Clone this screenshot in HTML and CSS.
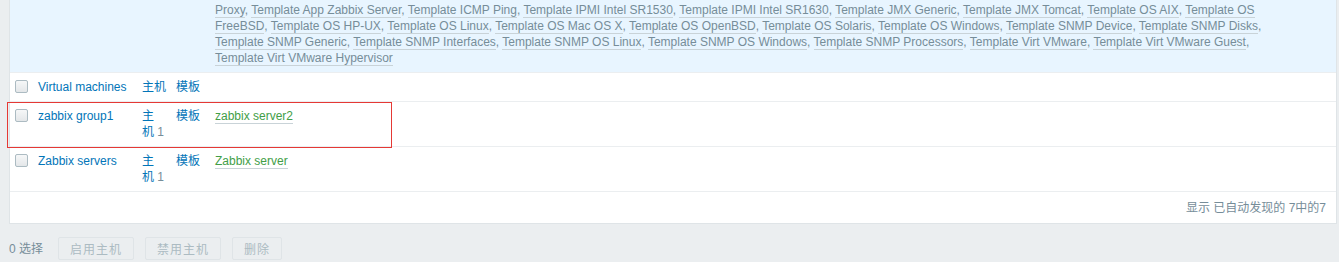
FILE: index.html
```html
<!DOCTYPE html>
<html lang="zh-CN">
<head>
    <meta charset="UTF-8">
    <title>主机群组</title>
    <link rel="stylesheet" href="styles.css">
</head>
<body>
    <div class="page">
        <div class="list">
            <table class="groups">
                <colgroup>
                    <col class="c-check">
                    <col class="c-name">
                    <col class="c-hosts">
                    <col class="c-tpl">
                    <col class="c-members">
                    <col class="c-rest">
                </colgroup>
                <tr class="row-hover row-top">
                    <td></td>
                    <td></td>
                    <td></td>
                    <td></td>
                    <td class="members">
                        <a class="alt grey" href="#">Proxy</a>, <a class="alt grey" href="#">Template App Zabbix Server</a>, <a class="alt grey" href="#">Template ICMP Ping</a>, <a class="alt grey" href="#">Template IPMI Intel SR1530</a>, <a class="alt grey" href="#">Template IPMI Intel SR1630</a>, <a class="alt grey" href="#">Template JMX Generic</a>, <a class="alt grey" href="#">Template JMX Tomcat</a>, <a class="alt grey" href="#">Template OS AIX</a>, <a class="alt grey" href="#">Template OS FreeBSD</a>, <a class="alt grey" href="#">Template OS HP-UX</a>, <a class="alt grey" href="#">Template OS Linux</a>, <a class="alt grey" href="#">Template OS Mac OS X</a>, <a class="alt grey" href="#">Template OS OpenBSD</a>, <a class="alt grey" href="#">Template OS Solaris</a>, <a class="alt grey" href="#">Template OS Windows</a>, <a class="alt grey" href="#">Template SNMP Device</a>, <a class="alt grey" href="#">Template SNMP Disks</a>, <a class="alt grey" href="#">Template SNMP Generic</a>, <a class="alt grey" href="#">Template SNMP Interfaces</a>, <a class="alt grey" href="#">Template SNMP OS Linux</a>, <a class="alt grey" href="#">Template SNMP OS Windows</a>, <a class="alt grey" href="#">Template SNMP Processors</a>, <a class="alt grey" href="#">Template Virt VMware</a>, <a class="alt grey" href="#">Template Virt VMware Guest</a>, <a class="alt grey" href="#">Template Virt VMware Hypervisor</a>
                    </td>
                    <td></td>
                </tr>
                <tr>
                    <td><input type="checkbox"></td>
                    <td><a class="link" href="#">Virtual machines</a></td>
                    <td><a class="link" href="#">主机</a></td>
                    <td><a class="link" href="#">模板</a></td>
                    <td class="members"></td>
                    <td></td>
                </tr>
                <tr>
                    <td><input type="checkbox"></td>
                    <td><a class="link" href="#">zabbix group1</a></td>
                    <td><a class="link" href="#">主机</a>&nbsp;<span class="count">1</span></td>
                    <td><a class="link" href="#">模板</a></td>
                    <td class="members"><a class="alt green" href="#">zabbix server2</a></td>
                    <td></td>
                </tr>
                <tr>
                    <td><input type="checkbox"></td>
                    <td><a class="link" href="#">Zabbix servers</a></td>
                    <td><a class="link" href="#">主机</a>&nbsp;<span class="count">1</span></td>
                    <td><a class="link" href="#">模板</a></td>
                    <td class="members"><a class="alt green" href="#">Zabbix server</a></td>
                    <td></td>
                </tr>
            </table>
            <div class="paging">显示 已自动发现的 7中的7</div>
        </div>

        <div class="actions">
            <span class="selected">0 选择</span>
            <button type="button" disabled>启用主机</button>
            <button type="button" disabled>禁用主机</button>
            <button type="button" disabled>删除</button>
        </div>

        <!-- annotation box drawn over the screenshot -->
        <div class="mark"></div>
    </div>
</body>
</html>
```

FILE: styles.css
```css
body {
    margin: 0;
    background-color: #ebeef0;
    color: #1f2c33;
    font-family: "Liberation Sans", Arial, "Noto Sans CJK SC", sans-serif;
    font-size: 12px;
    line-height: 16px;
}

a {
    text-decoration: none;
}

.page {
    position: relative;
    height: 262px;
    overflow: hidden;
}

.list {
    margin: 0 2px 0 9px;
    background-color: #ffffff;
    border: 1px solid #dfe4e7;
    border-top: none;
}

.groups {
    width: 100%;
    table-layout: fixed;
    border-collapse: collapse;
}

.c-check { width: 23px; }
.c-name { width: 104px; }
.c-hosts { width: 34px; }
.c-tpl { width: 39px; }
.c-members { width: 1085px; }
.c-rest { width: 41px; }

.groups td {
    padding: 6px 5px;
    vertical-align: top;
    border-bottom: 1px solid #ebeef0;
}

.row-hover {
    background-color: #e8f5ff;
}

.row-top td {
    padding-top: 2px;
}

input[type="checkbox"] {
    appearance: none;
    -webkit-appearance: none;
    display: block;
    width: 13px;
    height: 13px;
    margin: 1px 0 0 0;
    border: 1px solid #acbbc2;
    border-radius: 2px;
    background: linear-gradient(#f6f7f8, #e4e7e9);
    box-sizing: border-box;
}

.link {
    color: #0275b8;
}

.alt {
    border-bottom: 1px solid #c9d3d8;
}

.grey {
    color: #768d99;
}

.green {
    color: #429e47;
}

.count {
    color: #768d99;
}

.members {
    color: #768d99;
}

.paging {
    padding: 8px 10px 7px;
    text-align: right;
    color: #768d99;
}

.actions {
    display: flex;
    align-items: center;
    padding: 13px 0 0 9px;
}

.selected {
    color: #768d99;
    margin-right: 15px;
}

button {
    height: 23px;
    padding: 0 11px;
    margin-right: 11px;
    border: 1px solid #dfe4e7;
    border-radius: 2px;
    background-color: #ebeef0;
    color: #acbbc2;
    font-family: "Liberation Sans", Arial, "Noto Sans CJK SC", sans-serif;
    font-size: 12px;
    letter-spacing: 1px;
}

.mark {
    position: absolute;
    left: 7px;
    top: 102px;
    width: 383px;
    height: 44px;
    border: 1px solid #e53935;
}
```
